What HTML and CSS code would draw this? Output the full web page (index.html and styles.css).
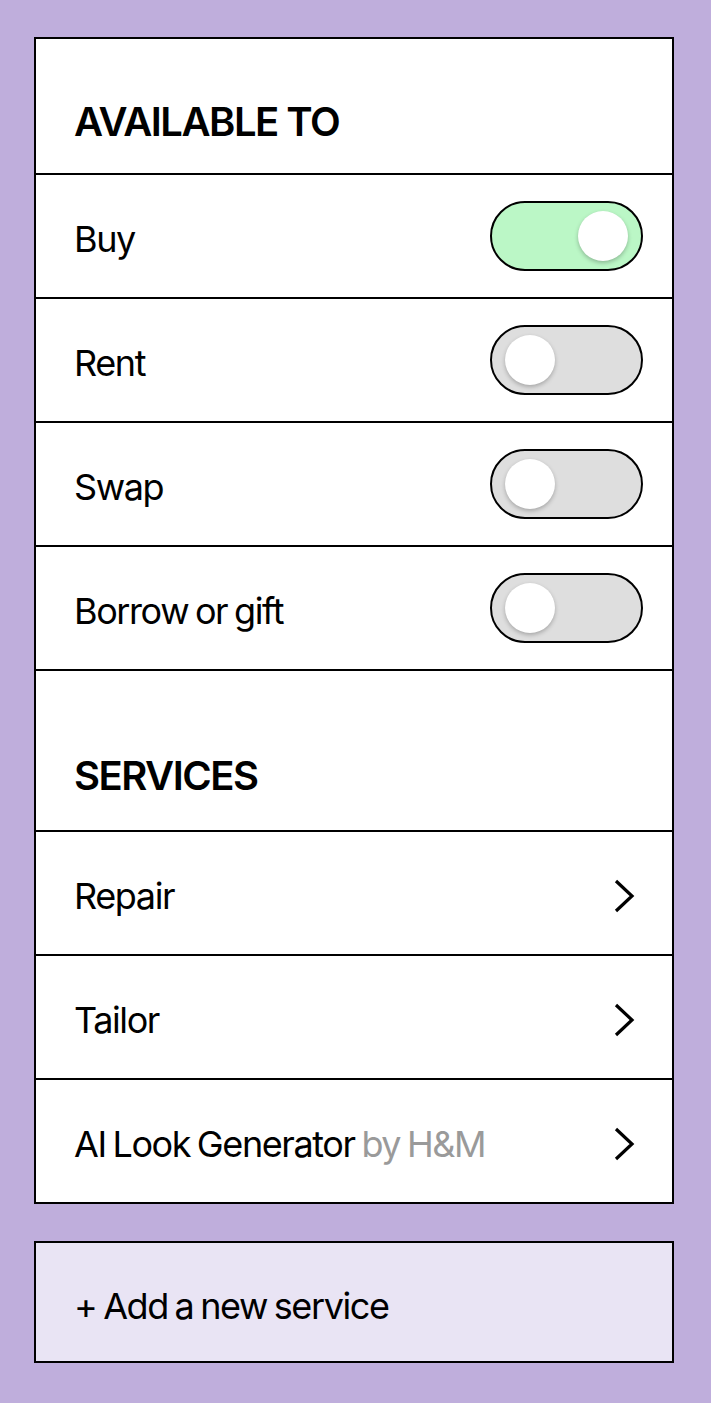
FILE: index.html
```html
<!DOCTYPE html>
<html>
    <head>
        <title>Listing Settings</title>
        <link rel="stylesheet" href="styles.css">
    </head>
    <body>
        <div class="card">
            <div class="section-head">AVAILABLE TO</div>
            <div class="row">
                <span class="label">Buy</span>
                <span class="toggle on"><span class="knob"></span></span>
            </div>
            <div class="row">
                <span class="label">Rent</span>
                <span class="toggle"><span class="knob"></span></span>
            </div>
            <div class="row">
                <span class="label">Swap</span>
                <span class="toggle"><span class="knob"></span></span>
            </div>
            <div class="row">
                <span class="label">Borrow or gift</span>
                <span class="toggle"><span class="knob"></span></span>
            </div>
            <div class="section-head services">SERVICES</div>
            <div class="row">
                <span class="label">Repair</span>
                <svg class="chevron" width="26" height="36" viewBox="0 0 26 36"><path d="M4 3 L20 18 L4 33" fill="none" stroke="#000" stroke-width="3.2"/></svg>
            </div>
            <div class="row">
                <span class="label">Tailor</span>
                <svg class="chevron" width="26" height="36" viewBox="0 0 26 36"><path d="M4 3 L20 18 L4 33" fill="none" stroke="#000" stroke-width="3.2"/></svg>
            </div>
            <div class="row">
                <span class="label">AI Look Generator <span class="muted">by H&amp;M</span></span>
                <svg class="chevron" width="26" height="36" viewBox="0 0 26 36"><path d="M4 3 L20 18 L4 33" fill="none" stroke="#000" stroke-width="3.2"/></svg>
            </div>
        </div>
        <div class="add-service">+ Add a new service</div>
    </body>
</html>
```
FILE: styles.css
```css
body {
    margin: 0;
    padding: 37px 37px 40px 34px;
    background-color: #bfaedc;
    font-family: Inter, "Liberation Sans", sans-serif;
    color: #000;
}
.card {
    width: 640px;
    box-sizing: border-box;
    border: 2px solid #000;
    background: #fff;
}
.section-head {
    height: 134px;
    box-sizing: border-box;
    display: flex;
    align-items: flex-end;
    padding: 0 0 27px 38px;
    font-size: 40px;
    font-weight: 600;
    letter-spacing: -1.5px;
}
.section-head.services {
    height: 161px;
    border-top: 2px solid #000;
    padding-bottom: 30px;
}
.row {
    height: 124px;
    box-sizing: border-box;
    border-top: 2px solid #000;
    display: flex;
    align-items: center;
    justify-content: space-between;
    padding: 0 29px 0 38px;
}
.label {
    padding-top: 5px;
    font-size: 36px;
    letter-spacing: -1.4px;
    word-spacing: -2px;
}
.muted {
    color: #9a9a9a;
}
.toggle {
    width: 153px;
    height: 70px;
    box-sizing: border-box;
    border: 2px solid #000;
    border-radius: 35px;
    background: #dedede;
    display: flex;
    align-items: center;
    padding: 0 13px;
}
.toggle.on {
    background: #bbf7c6;
    justify-content: flex-end;
}
.knob {
    width: 50px;
    height: 50px;
    border-radius: 50%;
    background: #fff;
    box-shadow: 0 2px 4px rgba(0, 0, 0, 0.25);
}
.chevron {
    margin: 6px 5px 0 0;
}
.add-service {
    margin-top: 37px;
    width: 640px;
    height: 122px;
    box-sizing: border-box;
    border: 2px solid #000;
    background: #e9e4f4;
    display: flex;
    align-items: center;
    padding: 8px 0 0 38px;
    font-size: 36px;
    letter-spacing: -1.4px;
    word-spacing: -2px;
}
```
